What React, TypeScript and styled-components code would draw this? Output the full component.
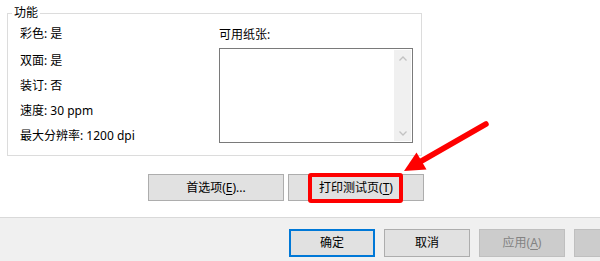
import React from "react";
import styled, { createGlobalStyle } from "styled-components";

const Global = createGlobalStyle`
  html, body { margin: 0; padding: 0; background: #ffffff; }
  body { font-family: "Noto Sans", "Noto Sans CJK SC", sans-serif; font-size: 12px; color: #000; }
`;

const Page = styled.div`
  position: relative;
  width: 600px;
  height: 261px;
  overflow: hidden;
  display: flex;
  flex-direction: column;
  font-family: "Noto Sans", "Noto Sans CJK SC", sans-serif;
  font-size: 12px;
`;

const TabArea = styled.div`
  height: 217px;
  flex-shrink: 0;
  background: #ffffff;
  padding: 5px 0 0 7px;
  box-sizing: border-box;
  display: flex;
  flex-direction: column;
`;

const Group = styled.fieldset`
  margin: 0;
  width: 415px;
  height: 151px;
  box-sizing: border-box;
  border: 1px solid #dcdcdc;
  padding: 4px 0 0 12px;
  display: grid;
  grid-template-columns: 199px 194px;
`;

const Legend = styled.legend`
  padding: 0 2px;
  margin-left: -8px;
  line-height: 16px;
  font-size: 12px;
`;

const InfoList = styled.div`
  display: flex;
  flex-direction: column;
  gap: 9px;
  padding-top: 1px;
`;

const InfoRow = styled.div<{ $first?: boolean }>`
  line-height: 16px;
  white-space: nowrap;
  margin-bottom: ${(p) => (p.$first ? "2px" : "0")};
`;

const PaperCol = styled.div`
  display: flex;
  flex-direction: column;
`;

const PaperLabel = styled.div`
  line-height: 16px;
  margin-top: 2px;
  height: 21px;
`;

const ListBox = styled.div`
  width: 194px;
  height: 95px;
  box-sizing: border-box;
  border: 1px solid #7a7a7a;
  background: #fff;
  display: flex;
  justify-content: flex-end;
  padding: 1px;
`;

const ScrollBar = styled.div`
  width: 17px;
  background: #f0f0f0;
  display: flex;
  flex-direction: column;
  justify-content: space-between;
  align-items: center;
  padding: 6px 0 5px;
  box-sizing: border-box;
`;

const ButtonsRow = styled.div`
  display: flex;
  gap: 4px;
  margin-top: 18px;
  margin-left: 141px;
`;

const Btn = styled.button<{ $w: number; $h: number; $variant?: "default" | "disabled" }>`
  flex-shrink: 0;
  width: ${(p) => p.$w}px;
  height: ${(p) => p.$h}px;
  box-sizing: border-box;
  margin: 0;
  padding: 0;
  font-family: "Noto Sans", "Noto Sans CJK SC", sans-serif;
  font-size: 12px;
  line-height: 16px;
  color: ${(p) => (p.$variant === "disabled" ? "#838383" : "#000")};
  background: ${(p) => (p.$variant === "disabled" ? "#cccccc" : "#e1e1e1")};
  border: ${(p) =>
    p.$variant === "default"
      ? "2px solid #0078d7"
      : p.$variant === "disabled"
      ? "1px solid #bfbfbf"
      : "1px solid #adadad"};
  display: flex;
  align-items: center;
  justify-content: center;
`;

const U = styled.span`
  text-decoration: underline;
  text-underline-offset: 2px;
`;

const Footer = styled.div`
  flex: 1;
  background: #f0f0f0;
  border-top: 1px solid #d9d9d9;
  display: flex;
  gap: 9px;
  padding: 11px 0 0 289px;
  box-sizing: border-box;
`;

const Highlight = styled.div`
  position: absolute;
  left: 308px;
  top: 173px;
  width: 95px;
  height: 30px;
  box-sizing: border-box;
  border: 4px solid #fe0000;
  border-radius: 3px;
  pointer-events: none;
`;

const ArrowSvg = styled.svg`
  position: absolute;
  left: 0;
  top: 0;
  pointer-events: none;
`;

const Chevron = ({ up }: { up?: boolean }) => (
  <svg width="8" height="5" viewBox="0 0 8 5">
    <path
      d={up ? "M0.5 4.5 L4 1 L7.5 4.5" : "M0.5 0.5 L4 4 L7.5 0.5"}
      fill="none"
      stroke="#c2c2c2"
      strokeWidth="1.3"
    />
  </svg>
);

export default function App() {
  return (
    <>
      <Global />
      <Page>
        <TabArea>
          <Group>
            <Legend>功能</Legend>
            <InfoList>
              <InfoRow $first>彩色: 是</InfoRow>
              <InfoRow>双面: 是</InfoRow>
              <InfoRow>装订: 否</InfoRow>
              <InfoRow>速度: 30 ppm</InfoRow>
              <InfoRow>最大分辨率: 1200 dpi</InfoRow>
            </InfoList>
            <PaperCol>
              <PaperLabel>可用纸张:</PaperLabel>
              <ListBox>
                <ScrollBar>
                  <Chevron up />
                  <Chevron />
                </ScrollBar>
              </ListBox>
            </PaperCol>
          </Group>
          <ButtonsRow>
            <Btn $w={136} $h={27}>
              首选项(<U>E</U>)...
            </Btn>
            <Btn $w={136} $h={27}>
              打印测试页(<U>T</U>)
            </Btn>
          </ButtonsRow>
        </TabArea>
        <Footer>
          <Btn $w={86} $h={28} $variant="default">确定</Btn>
          <Btn $w={86} $h={28}>取消</Btn>
          <Btn $w={86} $h={28} $variant="disabled">
            应用(<U>A</U>)
          </Btn>
          <Btn $w={86} $h={28} $variant="disabled"></Btn>
        </Footer>
        <Highlight />
        <ArrowSvg width="600" height="261" viewBox="0 0 600 261">
          <line x1="486" y1="124" x2="418" y2="163" stroke="#fe0000" strokeWidth="5.5" strokeLinecap="round" />
          <polygon points="404,171 416.5,152.5 426.5,169.5" fill="#fe0000" />
        </ArrowSvg>
      </Page>
    </>
  );
}
